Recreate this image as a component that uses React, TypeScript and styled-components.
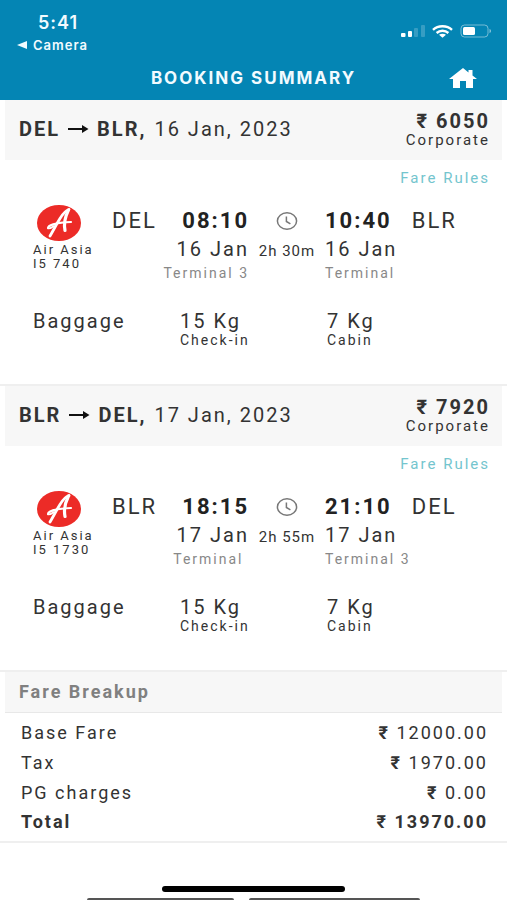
import React from "react";
import styled, { createGlobalStyle } from "styled-components";

const GlobalStyle = createGlobalStyle`
  * { box-sizing: border-box; }
  body {
    margin: 0;
    background: #fff;
    color: #333;
    font-family: Roboto, "Liberation Sans", sans-serif;
    font-size: 18px;
    letter-spacing: 2px;
  }
  p, h1, h2 { margin: 0; font-weight: 400; }
`;

const Screen = styled.div`
  display: flex;
  flex-direction: column;
  min-height: 100vh;
`;

const TopBar = styled.header`
  background: #0485b4;
  color: #f2fbff;
  height: 100px;
  display: flex;
  flex-direction: column;
  justify-content: space-between;
`;

const StatusBar = styled.div`
  display: flex;
  justify-content: space-between;
  padding: 12px 15px 0 17px;
  font-family: Inter, sans-serif;
  letter-spacing: 1px;
`;

const StatusLeft = styled.div`
  display: flex;
  flex-direction: column;
  gap: 2px;
`;

const Clock = styled.time`
  font-size: 18px;
  line-height: 22px;
  font-weight: 600;
  padding-left: 21px;
`;

const BackLink = styled.a`
  display: flex;
  align-items: center;
  gap: 6px;
  color: inherit;
  text-decoration: none;
  font-size: 13px;
  line-height: 18px;
  font-weight: 600;
`;

const StatusIcons = styled.div`
  display: flex;
  gap: 7px;
  padding-top: 10px;
  align-items: center;
  height: 28px;
`;

const TitleBar = styled.div`
  display: grid;
  grid-template-columns: 1fr auto 1fr;
  align-items: center;
  height: 44px;
  padding: 0 30px;
`;

const Title = styled.h1`
  grid-column: 2;
  font-family: Inter, sans-serif;
  font-size: 17px;
  line-height: 20px;
  font-weight: 700;
`;

const HomeLink = styled.a`
  justify-self: end;
  display: flex;
  color: #fff;
`;

const Segment = styled.section`
  border-bottom: 2px solid #efefef;
  padding-bottom: 36px;
`;

const SegmentHead = styled.div`
  display: flex;
  justify-content: space-between;
  align-items: center;
  height: 60px;
  margin: 0 5px;
  padding: 0 12px 0 14px;
  background: #f7f7f7;
`;

const Route = styled.h2`
  display: flex;
  align-items: center;
  gap: 8px;
  padding-bottom: 2px;
  font-size: 20px;
  line-height: 24px;
`;

const Price = styled.div`
  text-align: right;
`;

const Amount = styled.p`
  font-size: 20px;
  line-height: 20px;
  font-weight: 700;
`;

const Small = styled.p`
  font-size: 15px;
  line-height: 18px;
`;

const FareRules = styled.a`
  display: block;
  width: fit-content;
  margin: 8px 17px 0 auto;
  color: #74c5ce;
  font-size: 15px;
  line-height: 20px;
  text-decoration: none;
`;

const Flight = styled.div`
  display: grid;
  grid-template-columns: 79fr 137fr 76fr 167fr;
  padding: 17px 15px 0 33px;
`;

const Airline = styled.div`
  font-size: 13px;
  line-height: 14px;
  white-space: nowrap;

  svg {
    display: block;
    margin: 0 0 2px 4px;
  }
`;

const Stop = styled.div<{ $align: "left" | "right" }>`
  text-align: ${(p) => p.$align};
  white-space: nowrap;
`;

const StopTop = styled.div<{ $spread?: boolean }>`
  display: flex;
  justify-content: ${(p) => (p.$spread ? "space-between" : "flex-start")};
  gap: ${(p) => (p.$spread ? 8 : 20)}px;
  font-size: 22px;
  line-height: 32px;

  strong { font-weight: 700; color: #222; }
`;

const StopDate = styled.p`
  font-size: 20px;
  line-height: 24px;
`;

const Terminal = styled.p`
  font-size: 14px;
  line-height: 24px;
  color: #888;
`;

const Duration = styled.div`
  display: flex;
  flex-direction: column;
  align-items: center;
  font-size: 15px;
  line-height: 28px;
  letter-spacing: 1px;
  white-space: nowrap;

  svg { margin: 6px 0; }
`;

const Baggage = styled.div`
  display: grid;
  grid-template-columns: 147fr 147fr 165fr;
  padding: 25px 15px 0 33px;
  font-size: 20px;
  line-height: 22px;
`;

const Allowance = styled.p`
  font-size: 14px;
  line-height: 16px;
`;

const Breakup = styled.table`
  width: 100%;
  border-collapse: collapse;
  border-bottom: 2px solid #efefef;

  caption {
    margin: 0 5px;
    padding: 0 14px;
    background: #f7f7f7;
    border-bottom: 1px solid #e8e8e8;
    color: #808080;
    font-size: 18px;
    line-height: 40px;
    font-weight: 700;
    text-align: left;
  }
`;

const FareRow = styled.tr<{ $total?: boolean }>`
  font-size: 18px;
  font-weight: ${(p) => (p.$total ? 700 : 400)};

  th, td {
    padding: 0;
    height: 30px;
    font-weight: inherit;
  }
  th { text-align: left; padding-left: 21px; }
  td { text-align: right; padding-right: 19px; }
  &:first-child th, &:first-child td { padding-top: 4px; height: 34px; }
  &:last-child th, &:last-child td { padding-bottom: 6px; height: 35px; }
`;

const Rupee = styled.span`
  font-weight: 700;
`;

const Footer = styled.footer`
  margin-top: auto;
  display: flex;
  flex-direction: column;
  align-items: center;
  gap: 6px;
`;

const HomeIndicator = styled.div`
  width: 36%;
  height: 6px;
  border-radius: 3px;
  background: #000;
`;

const Tabs = styled.div`
  width: 100%;
  display: flex;
  gap: 15px;
  padding: 0 87px;
`;

const TabEdge = styled.div<{ $grow: number }>`
  flex: ${(p) => p.$grow};
  height: 2px;
  border-radius: 6px 6px 0 0;
  background: #555;
`;

const Arrow = () => (
  <svg width="21" height="10" viewBox="0 0 21 10" role="img" aria-label="to">
    <path d="M0 5h16" stroke="#111" strokeWidth="2" />
    <path d="M14 1l6.500 4-6.500 4z" fill="#111" />
  </svg>
);

const ClockIcon = () => (
  <svg width="22" height="20" viewBox="0 0 22 20" fill="none" stroke="#777" strokeWidth="1.5">
    <ellipse cx="11" cy="10" rx="9.6" ry="8.200" />
    <path d="M10.400 5.500v5l4 2.400" />
  </svg>
);

const AirlineLogo = () => (
  <svg width="44" height="36" viewBox="0 0 44 36" aria-hidden="true">
    <ellipse cx="22" cy="18" rx="22" ry="18" fill="#ec2b27" />
    <g fill="none" stroke="#fff" strokeLinecap="round" strokeLinejoin="round">
      <path d="M13 31C16 26 19 20 23 13.500C26 8.500 29 5.500 32 4.500" strokeWidth="2.800" />
      <path d="M31.500 5C28.500 11 26.500 18 28 25.500" strokeWidth="3.200" />
      <path d="M11 23C11 20 20 17.500 34 17" strokeWidth="2.200" />
      <path d="M11 23.500C13 24 15 22.500 17 21" strokeWidth="1.600" />
    </g>
  </svg>
);

type StopInfo = { code: string; time: string; date: string; terminal: string };
type Leg = { price: string; day: string; flight: string; duration: string; from: StopInfo; to: StopInfo };

const legs: Leg[] = [
  {
    price: "6050",
    day: "16 Jan, 2023",
    flight: "I5 740",
    duration: "2h 30m",
    from: { code: "DEL", time: "08:10", date: "16 Jan", terminal: "Terminal 3" },
    to: { code: "BLR", time: "10:40", date: "16 Jan", terminal: "Terminal" },
  },
  {
    price: "7920",
    day: "17 Jan, 2023",
    flight: "I5 1730",
    duration: "2h 55m",
    from: { code: "BLR", time: "18:15", date: "17 Jan", terminal: "Terminal\u00a0" },
    to: { code: "DEL", time: "21:10", date: "17 Jan", terminal: "Terminal 3" },
  },
];

const fares = [
  { label: "Base Fare", value: "12000.00" },
  { label: "Tax", value: "1970.00" },
  { label: "PG charges", value: "0.00" },
  { label: "Total", value: "13970.00", total: true },
];

const LegCard = ({ leg }: { leg: Leg }) => (
  <Segment>
    <SegmentHead>
      <Route>
        <b>{leg.from.code}</b>
        <Arrow />
        <b>{leg.to.code},</b>
        <span>{leg.day}</span>
      </Route>
      <Price>
        <Amount>₹ {leg.price}</Amount>
        <Small>Corporate</Small>
      </Price>
    </SegmentHead>
    <FareRules href="#fare-rules">Fare Rules</FareRules>
    <Flight>
      <Airline>
        <AirlineLogo />
        <p>Air Asia</p>
        <p>{leg.flight}</p>
      </Airline>
      <Stop $align="right">
        <StopTop $spread>
          <span>{leg.from.code}</span>
          <strong>{leg.from.time}</strong>
        </StopTop>
        <StopDate>{leg.from.date}</StopDate>
        <Terminal>{leg.from.terminal}</Terminal>
      </Stop>
      <Duration>
        <ClockIcon />
        {leg.duration}
      </Duration>
      <Stop $align="left">
        <StopTop>
          <strong>{leg.to.time}</strong>
          <span>{leg.to.code}</span>
        </StopTop>
        <StopDate>{leg.to.date}</StopDate>
        <Terminal>{leg.to.terminal}</Terminal>
      </Stop>
    </Flight>
    <Baggage>
      <p>Baggage</p>
      <div>
        <p>15 Kg</p>
        <Allowance>Check-in</Allowance>
      </div>
      <div>
        <p>7 Kg</p>
        <Allowance>Cabin</Allowance>
      </div>
    </Baggage>
  </Segment>
);

export default function App() {
  return (
    <Screen>
      <GlobalStyle />
      <TopBar>
        <StatusBar>
          <StatusLeft>
            <Clock>5:41</Clock>
            <BackLink href="#camera">
              <svg width="10" height="8" viewBox="0 0 10 8" aria-hidden="true">
                <path d="M0 4l10-4v8z" fill="currentColor" />
              </svg>
              Camera
            </BackLink>
          </StatusLeft>
          <StatusIcons>
            <svg width="24" height="13" viewBox="0 0 24 13" fill="#fff" role="img" aria-label="Signal">
              <rect x="0" y="8" width="4.500" height="4" rx="1" />
              <rect x="7" y="6" width="4" height="6" rx="1" />
              <rect x="13" y="3" width="4" height="9" rx="1" opacity=".2" />
              <rect x="20" y="0" width="4" height="12" rx="1" opacity=".2" />
            </svg>
            <svg width="21" height="13" viewBox="0 0 21 13" fill="none" stroke="#fff" strokeWidth="2.400" role="img" aria-label="Wi-Fi">
              <path d="M1 4.800C6 .1 15 .1 20 4.800" />
              <path d="M4.600 8C8 5 13 5 16.400 8" />
              <path d="M7 9.800C9 8.300 12 8.300 14 9.800L10.500 12.800z" fill="#fff" stroke="none" />
            </svg>
            <svg width="32" height="14" viewBox="0 0 32 14" fill="none" role="img" aria-label="Battery">
              <rect x="1" y="1" width="27" height="12" rx="3.500" stroke="#fff" strokeOpacity=".45" />
              <rect x="3" y="3" width="12" height="8" rx="1.500" fill="#fff" />
              <path d="M29.500 5c2 .4 2 3.600 0 4z" fill="#fff" fillOpacity=".5" />
            </svg>
          </StatusIcons>
        </StatusBar>
        <TitleBar>
          <Title>BOOKING SUMMARY</Title>
          <HomeLink href="#home" aria-label="Home">
            <svg width="28" height="20" viewBox="0 0 28 20" fill="currentColor">
              <path d="M14 0L0 11h4v9h7v-7h6v7h7v-9h4l-4.500-3.500V2h-4v2.400z" />
            </svg>
          </HomeLink>
        </TitleBar>
      </TopBar>
      <main>
        {legs.map((leg) => (
          <LegCard key={leg.flight} leg={leg} />
        ))}
        <Breakup>
          <caption>Fare Breakup</caption>
          <tbody>
            {fares.map((fare) => (
              <FareRow key={fare.label} $total={fare.total}>
                <th scope="row">{fare.label}</th>
                <td>
                  <Rupee>₹</Rupee> {fare.value}
                </td>
              </FareRow>
            ))}
          </tbody>
        </Breakup>
      </main>
      <Footer>
        <HomeIndicator />
        <Tabs>
          <TabEdge $grow={147} />
          <TabEdge $grow={171} />
        </Tabs>
      </Footer>
    </Screen>
  );
}
